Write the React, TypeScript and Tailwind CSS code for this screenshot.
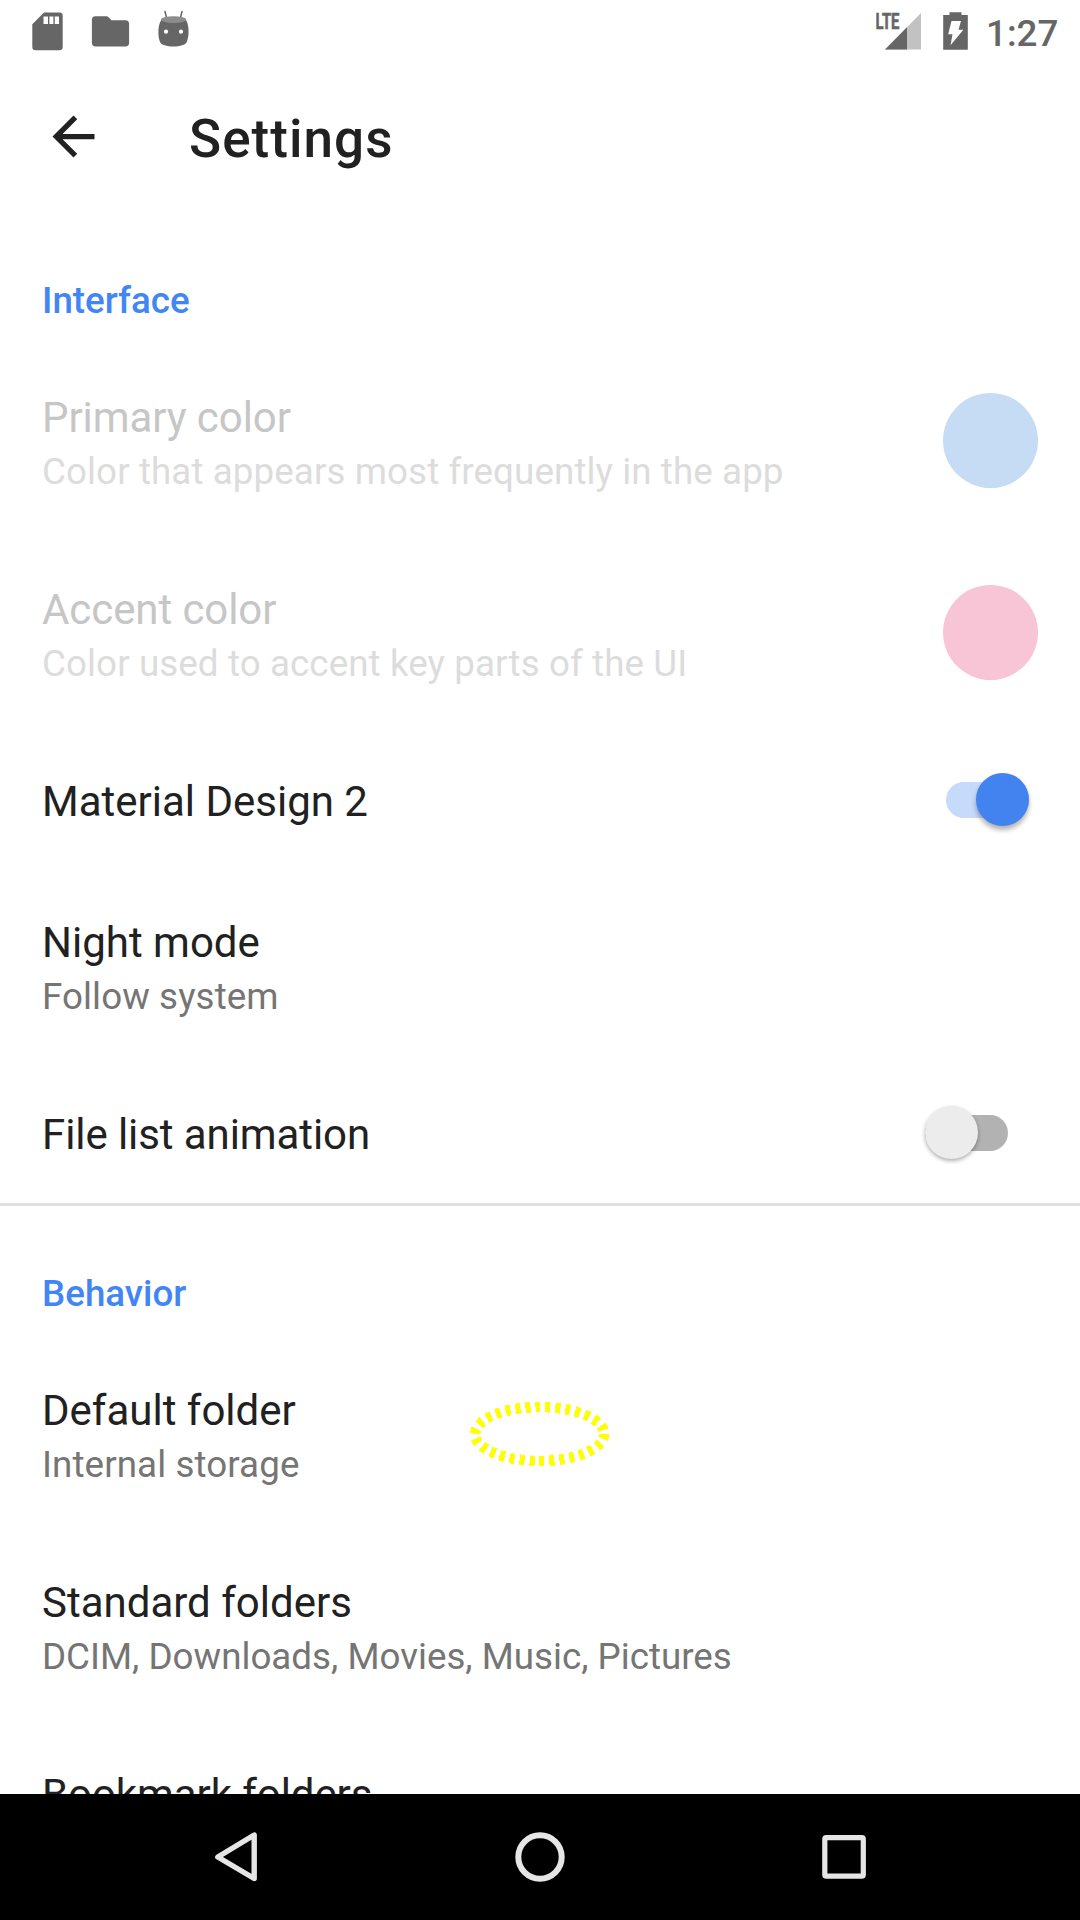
import type { ReactNode } from "react";

function SectionHeader({ children }: { children: ReactNode }) {
  return (
    <h2 className="h-[132px] pt-[66px] pl-[42px] text-[36.75px] leading-[43px] font-medium text-[#4285f4]">
      {children}
    </h2>
  );
}

function Row({
  title,
  summary,
  disabled = false,
  tightTitle = false,
  tightSummary = false,
  children,
}: {
  title: string;
  summary?: string;
  disabled?: boolean;
  tightTitle?: boolean;
  tightSummary?: boolean;
  children?: ReactNode;
}) {
  return (
    <div className={`flex shrink-0 items-center justify-between pl-[42px] ${summary ? "h-[192px]" : "h-[141px]"}`}>
      <div className="flex h-full flex-col gap-2 pt-12 whitespace-nowrap">
        <div
          className={`text-[42px] leading-[49px] ${tightTitle ? "tracking-[-0.08px]" : "tracking-normal"} ${
            disabled ? "text-[#c6c6c6]" : "text-[#212121]"
          }`}
        >
          {title}
        </div>
        {summary && (
          <div
            className={`text-[36.75px] leading-[43px] ${tightSummary ? "tracking-normal" : "tracking-[0.09px]"} ${
              disabled ? "text-[#dcdcdc]" : "text-[#757575]"
            }`}
          >
            {summary}
          </div>
        )}
      </div>
      {children}
    </div>
  );
}

function Switch({ on }: { on: boolean }) {
  return on ? (
    <div className="mr-[51px] flex h-9 w-[83px] items-center justify-end rounded-full bg-[#c6dafc]">
      <div className="size-[53px] shrink-0 rounded-full bg-[#4283ef] shadow-[0_4px_5px_rgba(0,0,0,0.3)]" />
    </div>
  ) : (
    <div className="mr-[72px] flex h-9 w-[83px] items-center rounded-full bg-[#b2b2b2]">
      <div className="size-[53px] shrink-0 rounded-full bg-[#ececec] shadow-[0_2px_4px_rgba(0,0,0,0.32)]" />
    </div>
  );
}

function StatusBar() {
  return (
    <header className="flex h-[63px] shrink-0 items-start justify-between pr-[22px] pl-8 text-[#666]">
      <div className="flex">
        <svg className="h-[63px] w-[59px]" viewBox="32 0 59 63" fill="currentColor">
          <path d="M44 12.5h15.5a3.2 3.2 0 0 1 3.2 3.2V47a3.2 3.2 0 0 1-3.2 3.2h-24a3.2 3.2 0 0 1-3.2-3.2V24.3Z" />
          <path fill="#fff" d="M43.5 16.4H48V24h-4.500zM49.400 16.400h4V24h-4zM54.800 16.400H59V24h-4.200z" />
        </svg>
        <svg className="h-[63px] w-[67px]" viewBox="91 0 67 63" fill="currentColor">
          <path d="M95.5 16.3h10.8q1.4 0 2.3.9l2.9 3h14a3.6 3.6 0 0 1 3.6 3.6v19a3.6 3.6 0 0 1-3.6 3.6h-30a3.6 3.6 0 0 1-3.6-3.6V19.9a3.6 3.6 0 0 1 3.6-3.6Z" />
        </svg>
        <svg className="h-[63px] w-8" viewBox="158 0 32 63" fill="currentColor">
          <path d="m165 11.5 1.7 7M182 11.5l-1.700 7" stroke="currentColor" strokeWidth="1.5" strokeLinecap="round" />
          <path d="M161.2 20h24.8c3.3 5 3.3 17 .6 22.2-1 2.6-6.5 4.3-13.2 4.3s-12.2-1.7-13.2-4.3c-2.7-5.2-2.5-17.2 1-22.2Z" />
          <ellipse cx="173.6" cy="19.6" rx="12.6" ry="3.4" fill="#8c8c8c" />
          <circle cx="166" cy="31.7" r="2.1" fill="#fff" />
          <circle cx="181" cy="31.7" r="2.1" fill="#fff" />
        </svg>
      </div>
      <div className="flex">
        <svg className="h-[63px] w-[67px]" viewBox="876 0 67 63" fill="currentColor">
          <path d="M921 13v36.5h-36z" fill="#c2c2c2" />
          <path d="M907 27.2v22.3h-22z" />
          <text
            x="875.5"
            y="29"
            fontSize="22.5"
            fontWeight="700"
            fontFamily="Roboto, sans-serif"
            textLength="24"
            lengthAdjust="spacingAndGlyphs"
            stroke="currentColor"
            strokeWidth="0.6"
          >
            LTE
          </text>
        </svg>
        <svg className="h-[63px] w-[43px]" viewBox="943 0 43 63" fill="currentColor">
          <path d="M949.5 12.3h12V15h6.3v34.7h-24.6V15h6.300z" />
          <path d="M951.500 21h9.500l-2.500 8.800h4.900L950.500 45.300l2-11h-4.300z" fill="#fff" />
        </svg>
        <span className="mt-3 w-[72px] text-[36.75px] leading-[43px] font-medium whitespace-nowrap">1:27</span>
      </div>
    </header>
  );
}

export default function App() {
  return (
    <div className="flex h-[1920px] w-[1080px] flex-col overflow-hidden bg-white font-['Roboto',sans-serif]">
      <StatusBar />
      <div className="flex h-[150px] shrink-0 items-start pl-[42px]">
        <svg className="mt-[42px] size-[63px] text-[#212121]" viewBox="0 0 24 24" fill="currentColor">
          <path d="M20 11H7.83l5.59-5.59L12 4l-8 8 8 8 1.41-1.41L7.83 13H20v-2z" />
        </svg>
        <h1 className="mt-[46px] ml-[84px] text-[53px] leading-[61px] font-medium tracking-[1.05px] text-[#212121]">
          Settings
        </h1>
      </div>
      <main className="flex min-h-0 flex-1 flex-col overflow-hidden">
        <section className="shrink-0 border-b-3 border-[#e0e0e0]">
          <SectionHeader>Interface</SectionHeader>
          <Row title="Primary color" summary="Color that appears most frequently in the app" disabled tightTitle>
            <div className="mr-[42px] mb-0.5 size-[95px] rounded-full bg-[#c5dcf4]" />
          </Row>
          <Row title="Accent color" summary="Color used to accent key parts of the UI" disabled tightTitle>
            <div className="mr-[42px] mb-0.5 size-[95px] rounded-full bg-[#f8c5d7]" />
          </Row>
          <Row title="Material Design 2">
            <Switch on />
          </Row>
          <Row title="Night mode" summary="Follow system" />
          <Row title="File list animation" tightTitle>
            <Switch on={false} />
          </Row>
        </section>
        <section className="shrink-0">
          <SectionHeader>Behavior</SectionHeader>
          <div className="relative">
            <Row title="Default folder" summary="Internal storage" />
            <svg
              className="absolute top-[60px] left-[466px] h-[72px] w-[148px]"
              viewBox="466 1398 148 72"
              fill="none"
              shapeRendering="crispEdges"
            >
              <ellipse cx="539.7" cy="1434" rx="64.5" ry="27" stroke="#ff0" strokeWidth="10.5" strokeDasharray="5 5" />
            </svg>
          </div>
          <Row title="Standard folders" summary="DCIM, Downloads, Movies, Music, Pictures" tightSummary />
          <Row title="Bookmark folders" tightTitle />
        </section>
      </main>
      <nav className="flex h-[126px] shrink-0 items-center bg-black pl-[212px]">
        <svg className="h-[126px] w-[48px]" viewBox="212 1794 48 126" fill="none" stroke="#e6e6e6">
          <path d="M254.2 1835v43.5L217.8 1857z" strokeWidth="5.4" strokeLinejoin="round" />
        </svg>
        <svg className="ml-[254px] h-[126px] w-[52px]" viewBox="514 1794 52 126" fill="none" stroke="#e6e6e6">
          <circle cx="540" cy="1857" r="21.7" strokeWidth="6" />
        </svg>
        <svg className="ml-[254px] h-[126px] w-[48px]" viewBox="820 1794 48 126" fill="none" stroke="#e6e6e6">
          <rect x="824.8" y="1837.7" width="38.5" height="38.5" rx="1.5" strokeWidth="5.2" />
        </svg>
      </nav>
    </div>
  );
}
